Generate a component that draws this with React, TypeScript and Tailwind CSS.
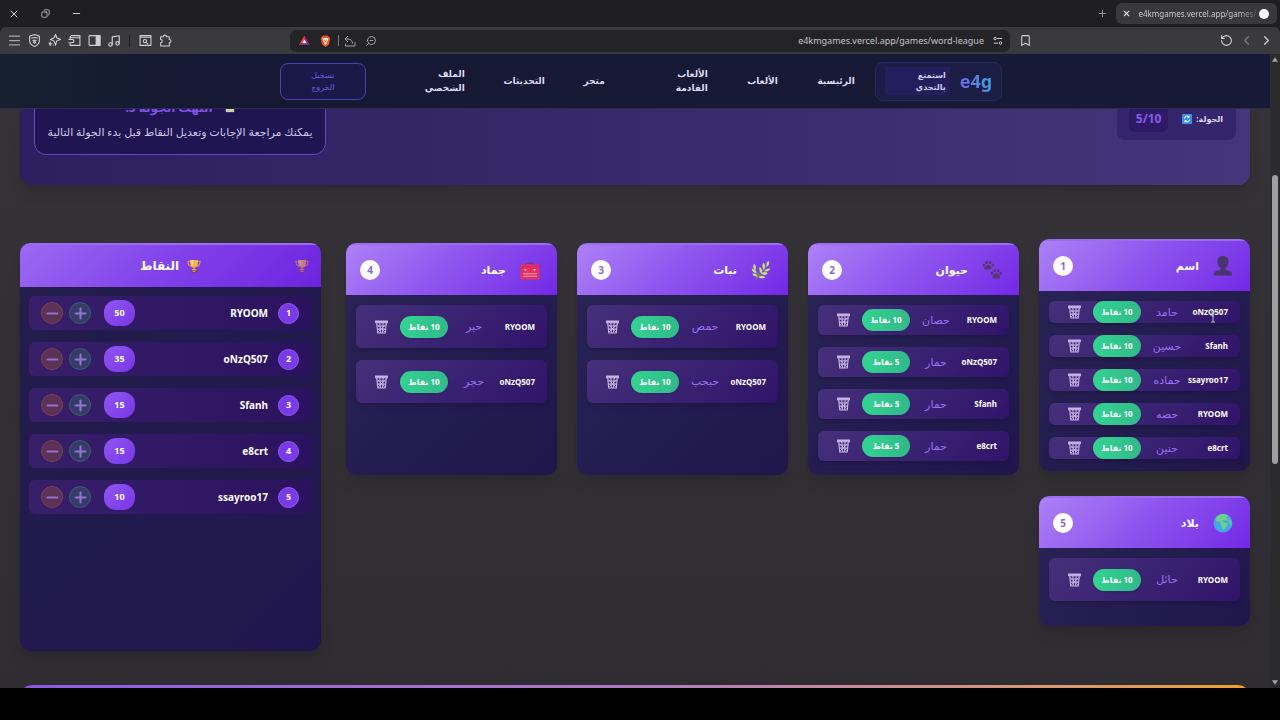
import {ReactNode} from "react";
import {Bookmark, ChevronLeft, ChevronRight, Copy, Menu, Minus, Music, Plus, RotateCcw, X, ZoomOut} from "lucide-react";

interface Answer {
    player: string,
    word: string,
    points: number
}

interface Category {
    title: string,
    icon: ReactNode,
    answers: Answer[],
    rowClass: string,
    active?: boolean
}

function Trophy({className}: {className?: string}) {
    return (
        <svg viewBox="0 0 32 32" className={className} aria-hidden="true">
            <path d="M8 5H2c0 7 3 11 8 12M24 5h6c0 7-3 11-8 12" fill="none" stroke="#e8a33a" strokeWidth="2.4"/>
            <path d="M7 2h18v7c0 7-4 11-9 11S7 16 7 9z" fill="#f6b545"/>
            <path d="M10 3h4v12c-3-2-4-5-4-9z" fill="#ffe2a0"/>
            <path d="M14 19h4v5h-4z" fill="#d98d2b"/>
            <path d="M11 23h10v3H11z" fill="#f0ab3d"/>
            <path d="M8 26h16v5H8z" fill="#7a4a3c"/>
            <path d="M13 27h6v2h-6z" fill="#e9c07a"/>
        </svg>
    )
}

function Person() {
    return (
        <svg viewBox="0 0 32 32" className="size-5" aria-hidden="true">
            <path d="M16 0c6 0 9 4 9 9 0 4-2 8-5 10v3c5 1 11 2 11 9H1c0-7 6-8 11-9v-3c-3-2-5-6-5-10 0-5 3-9 9-9z" fill="#4b3470"/>
        </svg>
    )
}

function Paws() {
    return (
        <svg viewBox="0 0 32 32" className="size-5" fill="#5a3670" aria-hidden="true">
            <path d="M10 8c4 0 6 4 5 6s-3 1-5 1-5 1-6-1 2-6 6-6z"/>
            <ellipse cx="3" cy="8" rx="2" ry="2.6"/>
            <ellipse cx="7" cy="4" rx="2" ry="2.8"/>
            <ellipse cx="13" cy="4" rx="2" ry="2.8"/>
            <ellipse cx="17" cy="8" rx="2" ry="2.6"/>
            <path d="M23 21c4 0 7 4 6 7s-3 1-6 1-5 1-6-1 2-7 6-7z"/>
            <ellipse cx="16" cy="21" rx="2" ry="2.6"/>
            <ellipse cx="20" cy="17" rx="2" ry="2.8"/>
            <ellipse cx="26" cy="17" rx="2" ry="2.8"/>
            <ellipse cx="30" cy="21" rx="2" ry="2.6"/>
        </svg>
    )
}

function Herb() {
    return (
        <svg viewBox="0 0 32 32" className="size-5" fill="#c5e07a" aria-hidden="true">
            <path d="M8 31C13 22 20 14 27 7M13 24C9 21 7 17 6 13" fill="none" stroke="#6b9a3c" strokeWidth="1.8"/>
            <path d="M28 1c2 4 1 8-3 10-1-5 0-8 3-10zM20 4c3 3 3 8 1 12-3-3-4-8-1-12zM14 11c4 2 5 6 3 11-3-3-5-7-3-11z"/>
            <path d="M31 14c-2 4-5 5-10 4 2-4 6-5 10-4zM27 21c-3 3-7 4-11 1 3-3 7-4 11-1zM23 28c-3 2-8 2-11-1 3-3 8-2 11 1z"/>
            <path d="M5 6c3 3 4 6 2 10-3-2-5-6-2-10zM1 14c5 0 7 3 8 7-5 0-7-3-8-7zM2 22c4-1 7 0 9 4-4 1-7 0-9-4z"/>
        </svg>
    )
}

function RedBox() {
    return (
        <svg viewBox="0 0 32 32" className="size-5" aria-hidden="true">
            <path d="M9 8c2-4 12-4 14 0" fill="none" stroke="#7b3a77" strokeWidth="2.4"/>
            <rect x="1" y="7" width="30" height="24" rx="2" fill="#ea2f60"/>
            <path d="M1 11h30" stroke="#c9285a" strokeWidth="1.4"/>
            <path d="m6 15 4-1v4zM26 15l-4-1v4z" fill="#ffd3df"/>
            <path d="M5 22h22M5 26h22" stroke="#ffa3bb" strokeWidth="1.6"/>
        </svg>
    )
}

function Globe() {
    return (
        <svg viewBox="0 0 32 32" className="size-5" aria-hidden="true">
            <circle cx="16" cy="16" r="15" fill="#44a8e6"/>
            <path d="M7 5c5-4 13-5 17-1l-3 3 3 3-5 2-5-1 3 4 6 1c1 4-3 6-4 9s-4 3-4-1-3-5-3-8-5-1-7-4c0-3 0-5 2-7z" fill="#6fd08a"/>
            <path d="M26 9c3 3 5 7 4 11l-3-2-2-5z" fill="#63c98c"/>
        </svg>
    )
}

function Bin() {
    return (
        <svg viewBox="0 0 24 26" className="h-[14px] w-[13px]" fill="none" stroke="#c9b3e6" strokeWidth="2" aria-hidden="true">
            <path d="M1 2h22v3H1z" fill="#c9b3e6"/>
            <path d="m3 5 2 19h14l2-19M4 11h16M4 17h16M9 5l1 19M15 5l-1 19"/>
            <path d="m4 8 7 7 8 8M20 8l-7 7-8 8" strokeWidth="1.5"/>
        </svg>
    )
}

const answersOf = (list: [string, string, number][]): Answer[] =>
    list.map(([player, word, points]) => ({player, word, points}))

const categories: Category[] = [
    {
        title: 'اسم', icon: <Person/>, rowClass: 'h-[22px]', active: true,
        answers: answersOf([['oNzQ507', 'حامد', 10], ['Sfanh', 'حسين', 10], ['ssayroo17', 'حماده', 10], ['RYOOM', 'حصه', 10], ['e8crt', 'حنين', 10]])
    },
    {
        title: 'حيوان', icon: <Paws/>, rowClass: 'h-[30px]',
        answers: answersOf([['RYOOM', 'حصان', 10], ['oNzQ507', 'حمار', 5], ['Sfanh', 'حمار', 5], ['e8crt', 'حمار', 5]])
    },
    {
        title: 'نبات', icon: <Herb/>, rowClass: 'h-[43px]',
        answers: answersOf([['RYOOM', 'حمص', 10], ['oNzQ507', 'حبحب', 10]])
    },
    {
        title: 'جماد', icon: <RedBox/>, rowClass: 'h-[43px]',
        answers: answersOf([['RYOOM', 'حبر', 10], ['oNzQ507', 'حجر', 10]])
    },
    {
        title: 'بلاد', icon: <Globe/>, rowClass: 'h-[43px]',
        answers: answersOf([['RYOOM', 'حائل', 10]])
    },
]

const scores = [
    {player: 'RYOOM', points: 50},
    {player: 'oNzQ507', points: 35},
    {player: 'Sfanh', points: 15},
    {player: 'e8crt', points: 15},
    {player: 'ssayroo17', points: 10},
]

const links = [
    {label: 'الرئيسية', width: 'w-[38px]'},
    {label: 'الألعاب', width: 'w-[31px]'},
    {label: 'الألعاب القادمة', width: 'w-[64px]', wrap: true},
    {label: 'متجر', width: 'w-[21px]'},
    {label: 'التحديثات', width: 'w-[41px]'},
    {label: 'الملف الشخصي', width: 'w-[60px]', wrap: true},
]

function IconButton({label, children}: {label: string, children: ReactNode}) {
    return (
        <button type="button" aria-label={label} className="flex size-5 shrink-0 items-center justify-center">{children}</button>
    )
}

function TabStrip() {
    return (
        <div className="flex h-[27px] items-center bg-[#1f1e22] pl-1 pr-[3px] text-[#d6d6d8]">
            <div className="flex gap-[11px]">
                <IconButton label="Close window"><X size={12}/></IconButton>
                <IconButton label="Restore window"><Copy size={9} className="-scale-x-100"/></IconButton>
                <IconButton label="Minimize window"><Minus size={11}/></IconButton>
            </div>
            <div className="ml-auto flex items-center gap-1">
                <IconButton label="New tab"><Plus size={11} className="text-[#9b9b9f]"/></IconButton>
                <div className="flex h-[21px] w-[161px] items-center justify-between rounded-md bg-[#39383c] pr-2">
                    <IconButton label="Close tab"><X size={9} strokeWidth={3}/></IconButton>
                    <span className="whitespace-nowrap bg-linear-to-r from-[#d6d6d8] from-85% to-[#5a5a5e] bg-clip-text text-[8px] text-transparent">e4kmgames.vercel.app/games/</span>
                    <span className="size-[10px] shrink-0 rounded-full bg-white"/>
                </div>
            </div>
        </div>
    )
}

function Toolbar() {
    return (
        <div className="flex h-[27px] items-center rounded-t-md bg-[#3a393d] px-1 text-[#d0d0d2]">
            <div className="flex items-center">
                <IconButton label="Menu"><Menu size={15} className="text-[#a5a5a8]"/></IconButton>
                <IconButton label="VPN">
                    <svg viewBox="0 0 24 24" className="size-[13px]" fill="none" stroke="currentColor" strokeWidth="2">
                        <path d="m12 1 9 3v8c0 5-4 9-9 11-5-2-9-6-9-11V4z"/>
                        <path d="M6 8c4-2 8-2 12 0M8 12c3-1 5-1 8 0M10 15c1-1 3-1 4 0l-2 2z"/>
                    </svg>
                </IconButton>
                <IconButton label="Leo AI">
                    <svg viewBox="0 0 24 24" className="size-[13px]" fill="none" stroke="currentColor" strokeWidth="2">
                        <path d="m14 1 2 6 7 3-7 3-2 7-3-7-6-3 6-3z"/>
                        <path d="m4 14 1 3 3 1-3 1-1 3-1-3-2-1 2-1zM10 19v3" fill="currentColor" strokeWidth="1"/>
                    </svg>
                </IconButton>
                <IconButton label="Wallet">
                    <svg viewBox="0 0 24 24" className="size-[13px]" fill="none" stroke="currentColor" strokeWidth="2">
                        <path d="M4 9V5l3-2h15v18H4v-4M4 7h18"/><path d="M1 10h7a3 3 0 0 1 0 6H1"/>
                    </svg>
                </IconButton>
                <IconButton label="Sidebar">
                    <svg viewBox="0 0 24 24" className="size-[13px]" fill="none" stroke="currentColor" strokeWidth="2">
                        <rect x="2" y="3" width="20" height="18" rx="1"/><path d="M15 3h7v18h-7z" fill="currentColor"/>
                    </svg>
                </IconButton>
                <IconButton label="Playlist"><Music size={14}/></IconButton>
                <span className="mx-[5px] h-3 w-px bg-[#1f1e22]"/>
                <IconButton label="Search tabs">
                    <svg viewBox="0 0 24 24" className="size-[13px]" fill="none" stroke="currentColor" strokeWidth="2">
                        <path d="M2 3h20v18H2zM2 6h20"/><circle cx="11" cy="13" r="3"/><path d="m13 15 4 4"/>
                    </svg>
                </IconButton>
                <IconButton label="Extensions">
                    <svg viewBox="0 0 24 24" className="size-[13px]" fill="none" stroke="currentColor" strokeWidth="2">
                        <path d="M3 5h5a3 3 0 1 1 6 0h5v5a3 3 0 1 1 0 6v6H3v-6a3 3 0 1 0 0-6z" strokeLinejoin="round"/>
                    </svg>
                </IconButton>
            </div>

            <div className="ml-[115px] flex h-[22px] min-w-0 flex-1 items-center rounded-md bg-[#242327]">
                <div className="flex items-center gap-px pl-1">
                    <IconButton label="Rewards">
                        <svg viewBox="0 0 24 24" className="size-[11px]">
                            <path d="M12 1 24 22H0z" fill="#9e1f63"/><path d="M12 1v12L0 22z" fill="#ff4724"/><path d="m0 22 12-7 12 7z" fill="#662d91"/><path d="m12 10 5 8H7z" fill="#fff"/>
                        </svg>
                    </IconButton>
                    <IconButton label="Shields">
                        <svg viewBox="0 0 24 28" className="h-3 w-[11px]">
                            <path d="M7 1h10l3 3 2 1 1 5-3 12-8 6-8-6-3-12 1-5 2-1z" fill="#f0561f"/>
                            <path d="m5 8 4-1h6l4 1-2 6-3 3 1 3-3 3-3-3 1-3-3-3z" fill="#fff"/>
                            <path d="m9 10 3 6 3-6" fill="none" stroke="#f0561f" strokeWidth="2"/>
                        </svg>
                    </IconButton>
                    <span className="ml-[2px] h-[11px] w-px bg-[#77777b]"/>
                    <IconButton label="Share">
                        <svg viewBox="0 0 24 24" className="size-3 text-[#a0a0a4]" fill="none" stroke="currentColor" strokeWidth="2">
                            <path d="M8 2 2 8l6 6M2 8h6c6 0 9 4 9 9M3 17v5h19v-8"/>
                        </svg>
                    </IconButton>
                    <IconButton label="Zoom"><ZoomOut size={12} className="-scale-x-100 text-[#a0a0a4]"/></IconButton>
                </div>
                <input aria-label="Address" readOnly value="e4kmgames.vercel.app/games/word-league"
                       className="min-w-0 flex-1 bg-transparent text-right text-[9px] text-[#c4c4c7] outline-none"/>
                <div className="ml-1 mr-[2px]">
                    <IconButton label="Site information">
                        <svg viewBox="0 0 24 24" className="size-[10px]" fill="none" stroke="currentColor" strokeWidth="2.4">
                            <circle cx="5" cy="6" r="3"/><path d="M10 6h12M2 17h10"/><circle cx="18" cy="17" r="3"/>
                        </svg>
                    </IconButton>
                </div>
            </div>

            <div className="ml-[5px] mr-[181px]">
                <IconButton label="Bookmark"><Bookmark size={13}/></IconButton>
            </div>
            <div className="flex items-center">
                <IconButton label="Reload"><RotateCcw size={13}/></IconButton>
                <IconButton label="Forward"><ChevronLeft size={15} className="text-[#7b7b7f]"/></IconButton>
                <IconButton label="Back"><ChevronRight size={15}/></IconButton>
            </div>
        </div>
    )
}

function NavBar() {
    return (
        <header className="relative z-10 flex h-[55px] items-center justify-center border-b border-[#2f2b4d] bg-linear-to-r from-[#16202f] via-[#151933] via-15% to-[#171a36] pl-3">
            <div className="flex h-[39px] items-center gap-[10px] rounded-lg border border-[#28275a] bg-[#1b1d45] px-[9px]">
                <span dir="ltr" className="bg-linear-to-r from-[#6a66ee] to-[#38a0d8] bg-clip-text text-lg font-bold leading-6 text-transparent">e4g</span>
                <span className="w-[65px] bg-[#231f5e] py-[2px] pl-6 pr-1 text-[8px] font-bold leading-3 text-[#d3cdf2]">استمتع بالتحدي</span>
            </div>
            <nav className="mr-5 flex items-center gap-[39px]">
                {links.map((link, index) => (
                    <a key={index} href="#"
                       className={`${link.width} ${link.wrap ? 'pl-4' : 'whitespace-nowrap'} text-[9px] font-bold leading-[14px] text-[#dcdcf2]`}>{link.label}</a>
                ))}
            </nav>
            <button type="button" className="mr-[39px] h-[37px] w-[86px] rounded-lg border border-[#4a42b4] bg-[#1a1a48] px-6 text-[8px] leading-3 text-[#6f5be0]">
                تسجيل الخروج
            </button>
        </header>
    )
}

function RoundBanner() {
    return (
        <section className="-mt-9 flex h-[112px] items-start justify-between rounded-xl bg-linear-to-l from-[#44367a] via-[#37296b] to-[#2d2060] px-[14px] shadow-lg">
            <div className="mt-6 flex h-[43px] items-center gap-[14px] rounded-lg bg-[#35256d] pl-3 pr-[13px]">
                <span className="flex items-center gap-1 text-[8px] font-bold text-[#ded8f5]">
                    الجولة:
                    <svg viewBox="0 0 24 24" className="size-[10px]" fill="none" stroke="#fff" strokeWidth="2.4" aria-hidden="true">
                        <rect width="24" height="24" rx="2" fill="#3f8fdc" stroke="none"/>
                        <path d="M6 11a6 6 0 0 1 11-3M18 13a6 6 0 0 1-11 3M17 4v4h-4M7 20v-4h4"/>
                    </svg>
                </span>
                <span dir="ltr" className="rounded-md bg-[#2e1a66] px-[7px] py-[3px] text-[12px] font-bold leading-5 text-[#8a5cf0]">5/10</span>
            </div>
            <div className="h-[82px] w-[292px] rounded-xl border border-[#6a44c4] bg-[#1f1550] pt-6 text-center">
                <h2 className="flex items-center justify-center gap-3 text-[12px] font-bold leading-5 text-[#8150e6]">
                    <svg viewBox="0 0 24 24" className="size-[10px]" aria-hidden="true">
                        <path d="M2 2h20v20H2z" fill="#cfd0b0"/><path d="M6 6h12v6H6z" fill="#7a7a50"/>
                    </svg>
                    انتهت الجولة 5!
                </h2>
                <p className="mt-1 whitespace-nowrap text-[11px] leading-5 text-[#cfc5ec]">يمكنك مراجعة الإجابات وتعديل النقاط قبل بدء الجولة التالية</p>
            </div>
        </section>
    )
}

function AnswerRow({answer, rowClass}: {answer: Answer, rowClass: string}) {
    return (
        <li className={`${rowClass} flex items-center rounded-md bg-linear-135 from-[#45307a] to-[#30136a] pl-4 pr-3 shadow-md shadow-black/10`}>
            <span className="min-w-0 flex-1 whitespace-nowrap text-[8px] font-bold text-white">{answer.player}</span>
            <span className="w-9 whitespace-nowrap text-center text-[11px] font-medium text-[#9b70f2]">{answer.word}</span>
            <span className="mr-2 flex h-[22px] w-12 items-center justify-center whitespace-nowrap rounded-full bg-linear-to-r from-[#34d391] to-[#30b98a] text-[8px] font-bold text-white shadow-sm">
                {answer.points} نقاط
            </span>
            <button type="button" aria-label={`حذف إجابة ${answer.player}`} className="mr-[10px] flex w-[18px] justify-center"><Bin/></button>
        </li>
    )
}

function CategoryCard({category, number}: {category: Category, number: number}) {
    return (
        <section className={`${category.active ? '-translate-y-1' : ''} ${number > 4 ? 'min-h-[130px]' : 'min-h-[232px]'} overflow-hidden rounded-[10px] bg-linear-135 from-[#2b2456] to-[#1f174c] shadow-lg`}>
            <div className="flex h-[52px] items-center border-t-2 border-[#9b6cf0] bg-linear-135 from-[#ad80f6] via-[#8e52ee] to-[#7426e6] pl-[14px] pr-[17px]">
                {category.icon}
                <h3 className="mr-[14px] flex-1 text-[11px] font-bold text-white">{category.title}</h3>
                <span className="flex size-5 items-center justify-center rounded-full bg-white text-[10px] font-bold text-[#8a6cc8]">{number}</span>
            </div>
            <ul className="flex flex-col gap-3 px-[10px] pb-2 pt-[10px]">
                {category.answers.map((answer, index) => (
                    <AnswerRow key={index} answer={answer} rowClass={category.rowClass}/>
                ))}
            </ul>
        </section>
    )
}

function ScoreBoard() {
    return (
        <aside className="min-h-[408px] w-[301px] shrink-0 overflow-hidden rounded-[10px] bg-linear-135 from-[#231e4c] to-[#20164e] shadow-lg">
            <div className="relative flex h-11 items-center justify-center gap-2 border-t-2 border-[#9b6cf0] bg-linear-135 from-[#9d68f2] via-[#8040ea] to-[#6d22de]">
                <Trophy className="absolute right-3 size-[14px] opacity-60"/>
                <Trophy className="size-[14px]"/>
                <h2 className="text-[12px] font-bold text-white">النقاط</h2>
            </div>
            <ol className="flex flex-col gap-3 p-[9px]">
                {scores.map((score, index) => (
                    <li key={score.player} className="flex h-[34px] items-center rounded-md bg-linear-to-l from-[#2a125f] to-[#371f6a] pl-3 pr-[13px]">
                        <span className="flex size-[21px] items-center justify-center rounded-full border border-[#8f5cf2] bg-[#7a3ae8] text-[9px] font-bold text-white">{index + 1}</span>
                        <span className="mr-[10px] flex-1 text-[10px] font-bold text-white">{score.player}</span>
                        <span className="flex h-[26px] w-[31px] items-center justify-center rounded-xl bg-linear-135 from-[#8f56f2] to-[#7834e6] text-[9px] font-bold text-white">{score.points}</span>
                        <button type="button" aria-label={`زيادة نقاط ${score.player}`} className="mr-[13px] flex size-[22px] items-center justify-center rounded-full border border-[#3e5a78] bg-[#363c68] text-[#9472d4]"><Plus size={17} strokeWidth={3}/></button>
                        <button type="button" aria-label={`إنقاص نقاط ${score.player}`} className="mr-[6px] flex size-[22px] items-center justify-center rounded-full border border-[#7a4258] bg-[#5c3156] text-[#9472d4]"><Minus size={17} strokeWidth={3}/></button>
                    </li>
                ))}
            </ol>
        </aside>
    )
}

function Scrollbar() {
    return (
        <div className="flex w-[10px] shrink-0 flex-col items-center bg-[#2b2b2c] py-[3px]">
            <svg viewBox="0 0 8 6" className="h-[5px] w-[6px]" aria-hidden="true"><path d="M4 0 8 6H0z" fill="#a3a3a3"/></svg>
            <div className="grow-[113]"/>
            <div className="w-[6px] grow-[289] rounded-full bg-[#9f9f9f]"/>
            <div className="grow-[216]"/>
            <svg viewBox="0 0 8 6" className="h-[5px] w-[6px]" aria-hidden="true"><path d="M4 6 8 0H0z" fill="#a3a3a3"/></svg>
        </div>
    )
}

export default function App() {
    return (
        <div className="flex h-screen flex-col bg-black pb-8 font-['Noto_Sans','DejaVu_Sans',sans-serif]">
            <div className="bg-[#1f1e22]">
                <TabStrip/>
                <Toolbar/>
            </div>
            <div className="flex min-h-0 flex-1">
                <div dir="rtl" className="relative min-w-0 flex-1 overflow-hidden bg-linear-to-b from-[#353338] to-[#2f2c32]">
                    <NavBar/>
                    <main className="px-5">
                        <RoundBanner/>
                        <div className="mt-[58px] flex items-start gap-[25px]">
                            <div className="grid flex-1 grid-cols-4 gap-x-5 gap-y-[21px]">
                                {categories.map((category, index) => (
                                    <CategoryCard key={index} category={category} number={index + 1}/>
                                ))}
                            </div>
                            <ScoreBoard/>
                        </div>
                        <div className="mt-[34px] h-20 overflow-hidden rounded-xl bg-linear-to-r from-[#8a5ae8] via-[#b07ac0] to-[#f0a028]"/>
                    </main>
                    <svg viewBox="0 0 6 12" className="absolute right-[54px] top-[257px] h-3 w-[6px]" fill="none" stroke="#b9b4c8" aria-hidden="true">
                        <path d="M1 1h4M3 1v10M1 11h4"/>
                    </svg>
                </div>
                <Scrollbar/>
            </div>
        </div>
    )
}
